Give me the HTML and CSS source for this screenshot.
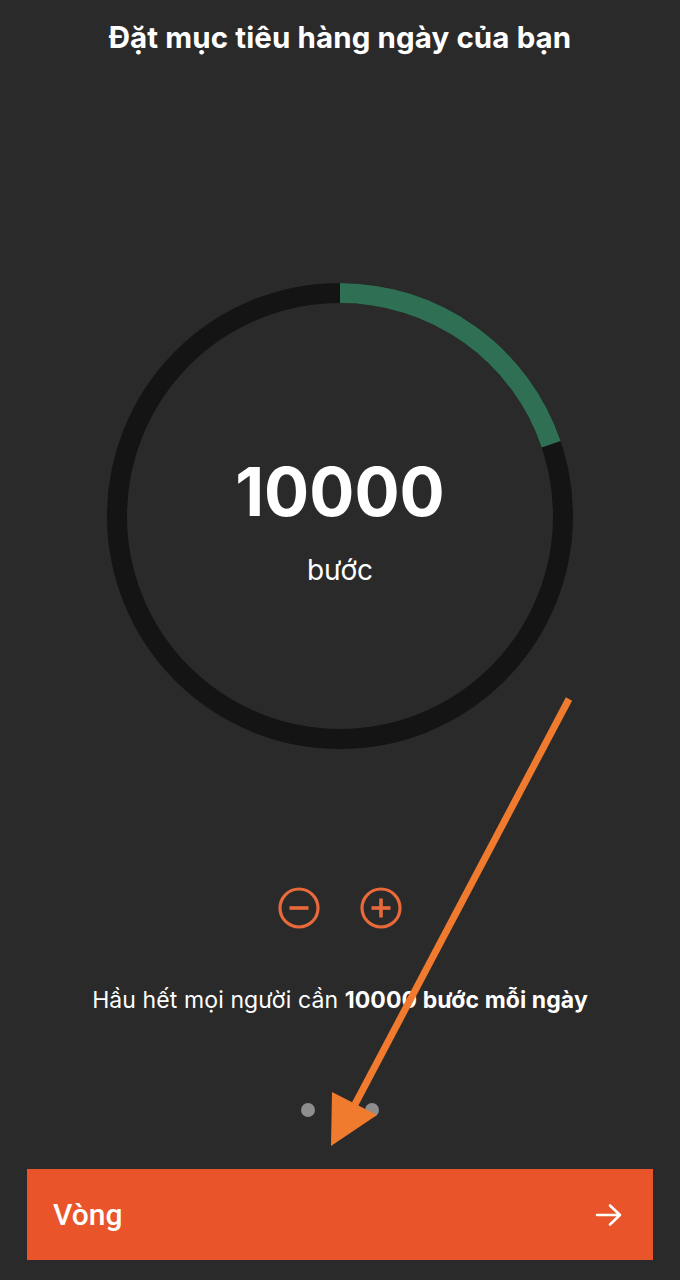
FILE: index.html
```html
<!DOCTYPE html>
<html lang="vi">
<head>
    <meta charset="UTF-8">
    <meta name="viewport" content="width=device-width, initial-scale=1.0">
    <title>Đặt mục tiêu hàng ngày</title>
    <link rel="stylesheet" href="styles.css">
</head>
<body>
    <div class="screen">
        <h1 class="title">Đặt mục tiêu hàng ngày của bạn</h1>

        <!-- Vòng mục tiêu -->
        <div class="ring">
            <svg class="ring-svg" width="466" height="466" viewBox="0 0 466 466">
                <circle cx="233" cy="233" r="223" fill="none" stroke="#141414" stroke-width="20"/>
                <circle cx="233" cy="233" r="223" fill="none" stroke="#2f6f53" stroke-width="20"
                        stroke-dasharray="277 1400" transform="rotate(-90 233 233)"/>
            </svg>
            <div class="ring-text">
                <div class="steps">10000</div>
                <div class="unit">bước</div>
            </div>
        </div>

        <div class="controls">
            <button class="icon-btn" aria-label="Giảm">
                <svg width="44" height="44" viewBox="0 0 44 44">
                    <circle cx="22" cy="22" r="19" fill="none" stroke="#e8693a" stroke-width="3.2"/>
                    <line x1="12.5" y1="22" x2="31.5" y2="22" stroke="#e8693a" stroke-width="3.6"/>
                </svg>
            </button>
            <button class="icon-btn" aria-label="Tăng">
                <svg width="44" height="44" viewBox="0 0 44 44">
                    <circle cx="22" cy="22" r="19" fill="none" stroke="#e8693a" stroke-width="3.2"/>
                    <line x1="12.5" y1="22" x2="31.5" y2="22" stroke="#e8693a" stroke-width="3.6"/>
                    <line x1="22" y1="12.5" x2="22" y2="31.5" stroke="#e8693a" stroke-width="3.6"/>
                </svg>
            </button>
        </div>

        <p class="hint">Hầu hết mọi người cần <b>10000 bước mỗi ngày</b></p>

        <div class="dots">
            <span class="dot"></span>
            <span class="dot active"></span>
            <span class="dot"></span>
        </div>

        <button class="next">
            <span>Vòng</span>
            <svg width="28" height="24" viewBox="0 0 28 24">
                <path d="M2 12 H25 M15 2.5 L25 12 L15 21.5" fill="none" stroke="#fff" stroke-width="2.6" stroke-linecap="round" stroke-linejoin="round"/>
            </svg>
        </button>
    </div>

    <!-- Mũi tên chú thích -->
    <svg class="annotation" width="680" height="1280" viewBox="0 0 680 1280">
        <line x1="569" y1="699" x2="352" y2="1110" stroke="#f07b2f" stroke-width="7"/>
        <polygon points="332,1092 377,1115 331,1146" fill="#f07b2f"/>
    </svg>
</body>
</html>
```

FILE: styles.css
```css
body {
    margin: 0;
    background-color: #2a2a2a;
    font-family: Inter, "Noto Sans", sans-serif;
    color: #fff;
}
.screen {
    width: 680px;
    height: 1280px;
    display: flex;
    flex-direction: column;
    align-items: center;
}
.title {
    margin: 20px 0 0;
    font-size: 29.5px;
    line-height: 34px;
    font-weight: 700;
    letter-spacing: 0.1px;
}
.ring {
    margin-top: 229px;
    width: 466px;
    height: 466px;
    display: grid;
}
.ring-svg, .ring-text {
    grid-area: 1 / 1;
}
.ring-text {
    display: flex;
    flex-direction: column;
    align-items: center;
    justify-content: center;
    gap: 19px;
    padding-top: 6px;
}
.steps {
    font-size: 67px;
    line-height: 80px;
    font-weight: 700;
}
.unit {
    font-size: 28px;
    line-height: 34px;
    padding-top: 2px;
}
.controls {
    margin-top: 137px;
    display: flex;
    gap: 38px;
}
.icon-btn {
    padding: 0;
    border: none;
    background: none;
    width: 44px;
    height: 44px;
}
.hint {
    margin: 56px 0 0;
    font-size: 23px;
    line-height: 28px;
    letter-spacing: 0.1px;
}
.hint b {
    font-weight: 700;
}
.dots {
    margin-top: 89px;
    display: flex;
    gap: 18px;
}
.dot {
    width: 14px;
    height: 14px;
    border-radius: 50%;
    background-color: #8e8e8e;
}
.dot.active {
    background-color: #f07b2f;
}
.next {
    margin-top: 52px;
    width: 626px;
    height: 91px;
    border: none;
    background-color: #e9542b;
    color: #fff;
    display: flex;
    align-items: center;
    justify-content: space-between;
    padding: 0 30px 0 26px;
    box-sizing: border-box;
    font-family: Roboto, "Liberation Sans", sans-serif;
    font-weight: 500;
    font-size: 30px;
}
.annotation {
    position: absolute;
    top: 0;
    left: 0;
    pointer-events: none;
}
```
